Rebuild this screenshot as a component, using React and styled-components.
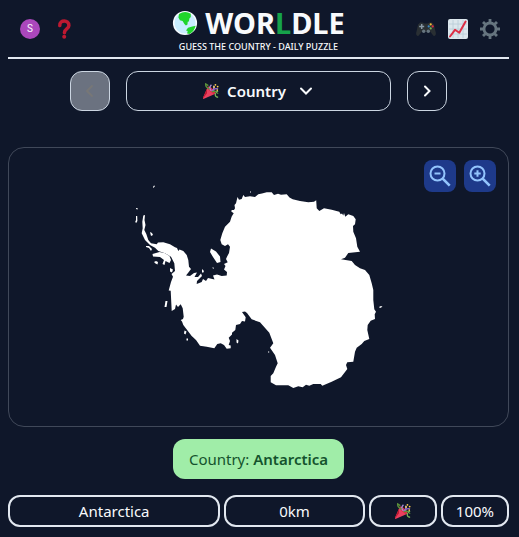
import React from "react";
import styled, { createGlobalStyle } from "styled-components";

const GlobalStyle = createGlobalStyle`
  *, *::before, *::after { box-sizing: border-box; }
  body {
    margin: 0;
    background: #0f172a;
    color: #f8fafc;
    font-family: "Noto Sans", "Open Sans", sans-serif;
    font-size: 15px;
    line-height: 24px;
  }
  button { font: inherit; color: inherit; cursor: pointer; }
  h1, p { margin: 0; }
  svg { display: block; flex: none; }
`;

const Page = styled.div`
  display: flex;
  flex-direction: column;
  padding: 0 10px 10px 8px;
`;

const Header = styled.header`
  display: grid;
  grid-template-columns: 1fr auto 1fr;
  align-items: center;
  height: 59px;
  border-bottom: 2px solid #e2e8f0;
`;

const HeaderActions = styled.nav`
  display: flex;
  align-items: center;
  justify-content: ${(p) => (p.$end ? "flex-end" : "flex-start")};
  gap: 12px;
  padding: 0 ${(p) => (p.$end ? "9px" : "12px")};
`;

const IconButton = styled.button`
  display: grid;
  place-items: center;
  width: ${(p) => p.$width || 20}px;
  height: 24px;
  padding: 0;
  border: 0;
  background: none;
`;

const Avatar = styled.span`
  display: grid;
  place-items: center;
  width: 20px;
  height: 20px;
  border-radius: 50%;
  background: #ab47bc;
  font: 10px/20px Roboto, sans-serif;
`;

const Brand = styled.div`
  display: flex;
  flex-direction: column;
  align-items: center;
`;

const Title = styled.h1`
  display: flex;
  align-items: center;
  gap: 7px;
  font-size: 29px;
  line-height: 36px;
  font-weight: 700;
`;

const Accent = styled.span`
  color: #16a34a;
`;

const Tagline = styled.p`
  font-size: 9px;
  line-height: 12px;
  font-weight: 500;
  white-space: nowrap;
`;

const ModeBar = styled.div`
  display: flex;
  justify-content: center;
  gap: 16px;
  margin-top: 12px;
`;

const ModeButton = styled.button`
  display: flex;
  align-items: center;
  justify-content: center;
  height: 40px;
  padding: 0;
  border: 1px solid #cbd5e1;
  border-radius: 12px;
  background: transparent;
  font-weight: 600;
`;

const StepButton = styled(ModeButton)`
  width: 40px;
  &:disabled { background: #6b7280; color: #777777; cursor: default; }
`;

const ModeMenu = styled(ModeButton)`
  flex: 0 1 265px;
  gap: 8px;
`;

const MenuArrow = styled.span`
  margin-left: 4px;
`;

const MapPanel = styled.section`
  position: relative;
  display: flex;
  align-items: center;
  justify-content: center;
  margin-top: 36px;
  padding: 37px 0;
  border: 1px solid #404859;
  border-radius: 16px;
`;

const ZoomControls = styled.div`
  position: absolute;
  top: 12px;
  right: 12px;
  display: flex;
  gap: 8px;
`;

const ZoomButton = styled.button`
  display: grid;
  place-items: center;
  width: 32px;
  height: 32px;
  padding: 0;
  border: 0;
  border-radius: 8px;
  background: #1e3a8a;
  color: #93c5fd;
`;

const Answer = styled.p`
  align-self: center;
  margin-top: 12px;
  padding: 8px 16px;
  border-radius: 12px;
  background: #a0eda8;
  color: #14532d;

  strong { font-weight: 600; }
`;

const GuessRow = styled.div`
  display: grid;
  grid-template-columns: repeat(7, minmax(0, 1fr));
  gap: 4px;
  margin-top: 16px;
`;

const GuessCell = styled.div`
  grid-column: span ${(p) => p.$span || 1};
  display: flex;
  align-items: center;
  justify-content: center;
  height: 32px;
  border: 2px solid #e2e8f0;
  border-radius: 12px;
`;

function Globe() {
  return (
    <svg width="26" height="26" viewBox="0 0 26 26" aria-hidden="true">
      <circle cx="13" cy="13" r="11.3" fill="#c8edff" stroke="#f4faff" strokeWidth="1.6" />
      <path d="M7 4.1Q13 .2 18.8 3.8V7l-1.4 1.4-.5 3-1.2.4-.2 2.6-1.6 1-1.5-1.3-1.8-3.2-2.7-.7-1.5-2.6Z" fill="#20d52b" />
      <path d="M23.7 15.8l-3.4.6-4.3 1.4-2 2.6 1.7.6-.6 2.5 2.4.4q4.7-2.2 6.2-8.1Z" fill="#20d52b" />
    </svg>
  );
}

function Popper({ size = 16 }) {
  return (
    <svg width={size} height={size} viewBox="0 0 36 36" aria-hidden="true">
      <path d="M11 8 0 33q-.6 2 1 3L28 24Z" fill="#ea405f" />
      <path d="m9 13-9 20q-.5 1 0 2l9-12Z" fill="#be1931" />
      <path d="M11 8q5-1 12 6t5 11q-6 0-12-6T11 8Z" fill="#dd2e44" />
      <path d="M18 17q-6-6 1-13M19 17q7 2 5-11" fill="none" stroke="#aa8dd8" strokeWidth="3" />
      <path d="M15 14Q5 10 6 2l6 4M20 20q5-4 9 0t5 3" fill="none" stroke="#5c913b" strokeWidth="3" />
      <path d="M28 23q-2 9 6 9M29 21l5-3" fill="none" stroke="#77b255" strokeWidth="3" />
      <path d="M21 17q4-6 13-4" fill="none" stroke="#9266cc" strokeWidth="3" />
      <g fill="#ffcc4d"><circle cx="28" cy="4" r="2" /><circle cx="33" cy="8" r="2" /><circle cx="25" cy="9" r="2" /><circle cx="32" cy="16" r="2" /></g>
    </svg>
  );
}

function Question() {
  return (
    <svg width="20" height="20" viewBox="0 0 20 20" aria-hidden="true">
      <path d="M5.8 6.6C5.6 3.2 8 2 10.3 2s4.6 1.5 4.6 4.5c0 3.6-4.5 3.2-4.5 7.2" fill="none" stroke="#be1931" strokeWidth="3.5" strokeLinecap="round" />
      <circle cx="10.2" cy="17.8" r="2" fill="#be1931" />
    </svg>
  );
}

function Gamepad() {
  return (
    <svg width="20" height="20" viewBox="0 0 20 20" aria-hidden="true">
      <path d="M4.1 3.5h2.8l1.2 1.1h3.8l1.2-1.1h2.8l2 2.1 2 8.7q.1 3-1.8 2.7-1 0-2-1.9l-2.3-2.8H6.2l-2.3 2.8q-1 1.9-2 1.9-1.9.3-1.8-2.7l2-8.7Z" fill="#292f33" />
      <path d="M5.7 5v5M3.2 7.5h5" stroke="#8899a6" strokeWidth="1.5" />
      <g fill="#66757f"><circle cx="7.7" cy="12.2" r="1.7" /><circle cx="12.3" cy="12.2" r="1.7" /></g>
      <circle cx="14.7" cy="5.4" r="1.1" fill="#f4bd35" />
      <circle cx="16.7" cy="7.4" r="1.1" fill="#dd2e44" />
      <circle cx="12.7" cy="7.4" r="1.1" fill="#3b88c3" />
      <circle cx="14.7" cy="9.4" r="1.1" fill="#77b255" />
    </svg>
  );
}

function Chart() {
  return (
    <svg width="20" height="20" viewBox="0 0 20 20" aria-hidden="true">
      <rect width="20" height="20" rx="2" fill="#dce7ed" />
      <path d="M1 5h18M1 10h18M1 15h18M5 1v18M10 1v18M15 1v18" stroke="#b8cbd5" strokeWidth=".8" />
      <path d="m2 17.5 5-6.7 4.3 3L17.6 2.6" fill="none" stroke="#dd2e44" strokeWidth="2" strokeLinecap="round" strokeLinejoin="round" />
    </svg>
  );
}

function Gear() {
  return (
    <svg width="20" height="20" viewBox="0 0 20 20" aria-hidden="true">
      <g fill="none" stroke="#66757f">
        <circle cx="10" cy="10" r="6" strokeWidth="2.8" />
        <path d="M10 0v3.7M10 16.3V20M0 10h3.7M16.3 10H20M3 3l2.6 2.6M14.4 14.4 17 17M3 17l2.6-2.6M14.4 5.6 17 3" strokeWidth="2.8" />
      </g>
    </svg>
  );
}

function Chevron({ d }) {
  return (
    <svg width="16" height="16" viewBox="0 0 16 16" fill="none" stroke="currentColor" strokeWidth="2" strokeLinecap="round" aria-hidden="true">
      <path d={d} />
    </svg>
  );
}

function Magnifier({ plus }) {
  return (
    <svg width="24" height="24" viewBox="0 0 24 24" fill="none" stroke="currentColor" strokeWidth="2" aria-hidden="true">
      <circle cx="9.5" cy="9.5" r="7" />
      <path d={plus ? "M6.3 9.5h6.4M9.5 6.3v6.4" : "M6.5 9.5h6"} />
      <path d="m14.7 14.7 7 7" strokeWidth="2.6" />
    </svg>
  );
}

const mainland =
  "M143.3 215.5L145 215 144.5 220 145.5 225 144.3 230 146.3 234 148.3 240 151 243.3 156.7 244.3 158 242.5 163.3 242.3 170 244.3 175 247.3 177 248 178.3 251 179.5 249.5 183.3 251 186.7 255 188.3 260 189 266.7 191 269 188 273 186 275.5 190 276 194 273 197 272.5 194.5 277 198 277 201 273.5 202 276 197 281 196.7 284 201.7 282 203 279 206 281 208 278 214.5 279.5 213 275.5 217 274.5 221.7 276 226.7 275.5 227 272 224 269.5 225.5 266 224 264 227.7 262.3 226 259 227 256.7 229 253 230 246.7 228 244.3 225 246 221.7 244.3 220.3 240 222.3 233.3 225 226.7 230 221.7 231.7 216.5 233.7 213.3 231.3 211.5 231.7 210 234 210 235 208.3 234.5 205 236 203.3 237.5 197 239 199.8 241.7 199 243.3 195 245 197 250 196.3 255 197 258.3 194.3 262 193.5 266.7 192.2 271.7 192.2 274 195 278 193.7 281 194.8 286.7 194.3 289.5 197.5 292.7 199.3 300 201 308.3 202.3 314 201.7 316.2 200.2 316.7 208.3 319.3 211 324 208.3 331.7 209.7 339.3 211.7 340.7 214.3 342 213.5 343.3 215.5 344 213 345.3 216.7 348.3 214.3 353.3 216 355.7 219.3 355 224.3 353 226 353.3 231.7 356 238.3 357.3 246.7 360 251.7 348.3 253 345 257.7 341 259.3 351.7 261 355 265 360 268.3 365 270 369.3 275 371.7 283.3 373.3 290 373.3 300 374.3 309.3 376 311.7 374.7 314.3 375 319 370.7 320.7 367.7 325 367.3 330 369.3 339 364.3 341 361.7 344 356.7 347.7 355 351.7 353.3 361.7 347.3 362.3 346 365 347.3 369 341 377.3 331.7 381.7 322.3 385.7 320.7 384 313.3 384 309.3 385.7 306 384.7 302.7 387.3 298.3 386.3 293.3 388 288.3 385.3 276 385.3 270.7 382.3 270.7 376 273.3 373.3 276 366.7 277.7 363.3 275 355 270 347.7 273.3 343.3 269.3 332.7 260 322.3 251.7 319.3 247 313 245 311.5 242 312 245.7 317.3 245 321.5 242 321 240 324 236 325 235.3 330 232 332.7 232 334.5 228.7 337.7 230 341 228.7 345 230.7 345.5 230.7 348.3 226.7 348.7 224 345 220.7 343.3 217.3 344 214.3 348.3 206.7 346.7 200 345.7 196 340 191.7 336 183.3 325 182 321.5 180.7 320 183 319 183.7 316.7 182.7 308.3 180.7 304.3 178 307 176 304.5 175 309 171.7 311 170.7 290.7 168.7 290.5 171 282 173 276.7 171.5 274 175 271 174.3 263.3 171 256.7 165 253.3 158.3 251 155 247.7 150 245 145 240 141.7 233.3 142.7 228.3 142.3 221.7Z";

const islands =
  "M153 187l1-1.5 1 .5-1.5 2zM136 208l2 .5-.5 1-1.5-.5zM136 216l1.2 0 .2 5-1.2 2-1-1 .8-2zM150 232l2 1 1 2-2 1zM146 246l3 0 3 3-1 2-2-3-3-1zM152.5 254l7-2 5 1 5 3 1.5 4-1.5 3-4-2-1 4-2-1 1.5-4-4-3-7-.5zM154 262l2-1 2 1-.5 2.5-2-1zM170 268l3 1.5-1 3-2-1zM211 248.5l5 3 4 5 .5 5.5-3.5 1-4-6-3-5zM202 269l2 2-1 2-1-1zM212.5 267l1.5 1-1 1zM250 191.5h1v1h-1zM165.5 301l2 0-1 6-2 0zM184.5 330.5l2 1-1 3-1.5-1zM186.5 338.5l1.5 0 0 2-1.5 0zM236.5 339l2 1.5-.5 3-1.5-1zM268 351.5h1.2v1H268zM379 307l2-1 1.5.8-2.5 1.2z";

function Antarctica() {
  return (
    <svg width="250" height="204" viewBox="134 185 250 204" role="img" aria-label="Country outline">
      <path d={mainland} fill="#ffffff" />
      <path d={islands} fill="#ffffff" />
    </svg>
  );
}

export default function App() {
  return (
    <>
      <GlobalStyle />
      <Page>
        <Header>
          <HeaderActions>
            <IconButton aria-label="Profile"><Avatar>S</Avatar></IconButton>
            <IconButton $width={24} aria-label="How to play"><Question /></IconButton>
          </HeaderActions>
          <Brand>
            <Title><Globe /><span>WOR<Accent>L</Accent>DLE</span></Title>
            <Tagline>GUESS THE COUNTRY - DAILY PUZZLE</Tagline>
          </Brand>
          <HeaderActions $end>
            <IconButton aria-label="Other games"><Gamepad /></IconButton>
            <IconButton aria-label="Statistics"><Chart /></IconButton>
            <IconButton aria-label="Settings"><Gear /></IconButton>
          </HeaderActions>
        </Header>
        <main>
          <ModeBar>
            <StepButton disabled aria-label="Previous round"><Chevron d="m10 3-5 5 5 5" /></StepButton>
            <ModeMenu aria-haspopup="listbox">
              <Popper /><span>Country</span>
              <MenuArrow><Chevron d="m3 5.5 5 5 5-5" /></MenuArrow>
            </ModeMenu>
            <StepButton aria-label="Next round"><Chevron d="m6 3.5 4.5 4.5-4.5 4.5" /></StepButton>
          </ModeBar>
          <MapPanel>
            <Antarctica />
            <ZoomControls>
              <ZoomButton aria-label="Zoom out"><Magnifier /></ZoomButton>
              <ZoomButton aria-label="Zoom in"><Magnifier plus /></ZoomButton>
            </ZoomControls>
          </MapPanel>
        </main>
        <Answer>Country: <strong>Antarctica</strong></Answer>
        <GuessRow>
          <GuessCell $span={3}>Antarctica</GuessCell>
          <GuessCell $span={2}>0km</GuessCell>
          <GuessCell><Popper /></GuessCell>
          <GuessCell>100%</GuessCell>
        </GuessRow>
      </Page>
    </>
  );
}
